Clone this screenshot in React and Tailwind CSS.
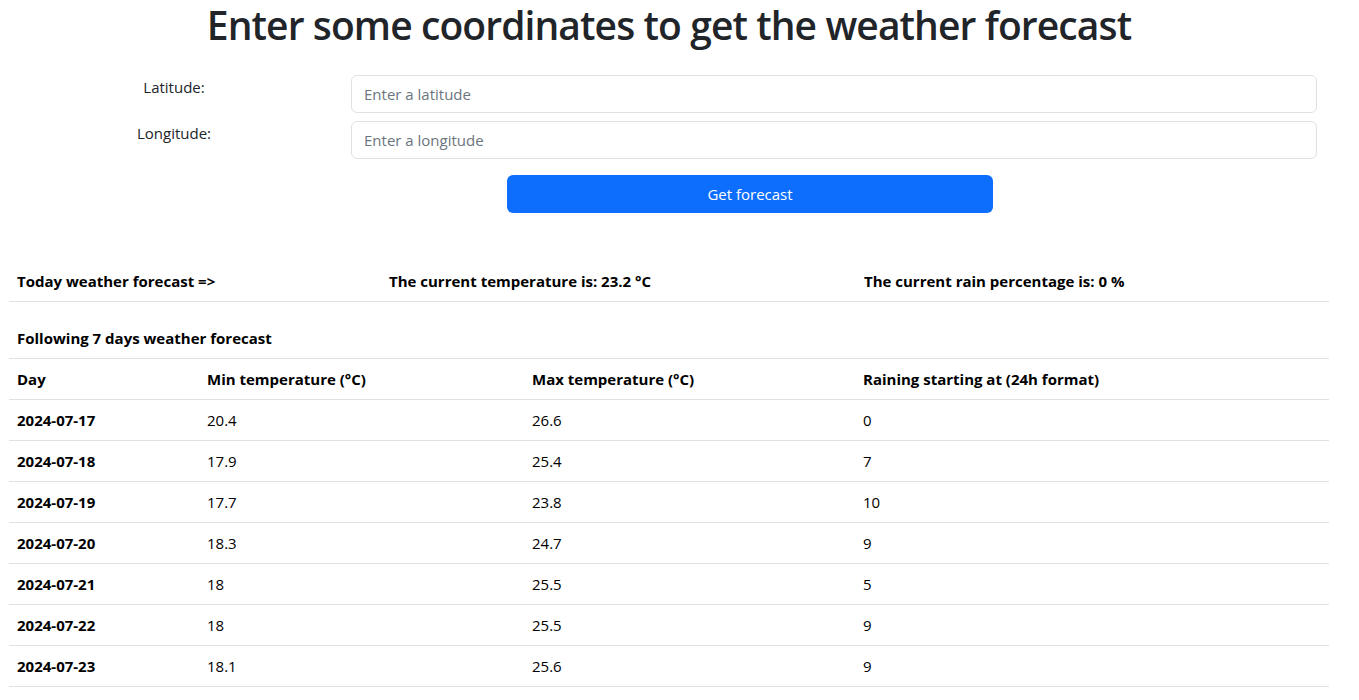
const days = [
  { day: "2024-07-17", min: "20.4", max: "26.6", rain: "0" },
  { day: "2024-07-18", min: "17.9", max: "25.4", rain: "7" },
  { day: "2024-07-19", min: "17.7", max: "23.8", rain: "10" },
  { day: "2024-07-20", min: "18.3", max: "24.7", rain: "9" },
  { day: "2024-07-21", min: "18", max: "25.5", rain: "5" },
  { day: "2024-07-22", min: "18", max: "25.5", rain: "9" },
  { day: "2024-07-23", min: "18.1", max: "25.6", rain: "9" },
];

export default function App() {
  return (
    <div
      className="min-h-screen bg-white text-[#212529] text-base"
      style={{ fontFamily: '"Open Sans", "Noto Sans", sans-serif' }}
    >
      <div className="w-[1320px] ml-[9px]">
        <h1 className="pt-[1px] text-[39px] leading-[47px] font-semibold text-center tracking-[-0.9px]">
          Enter some coordinates to get the weather forecast
        </h1>

        <div className="mt-[27px] flex flex-col gap-2">
          <div className="flex">
            <label className="w-[330px] text-center leading-6 text-[15px]">Latitude:</label>
            <div className="flex-1 px-3">
              <input
                placeholder="Enter a latitude"
                className="w-full h-[38px] px-3 border border-[#dee2e6] rounded-md text-[15px] placeholder-[#6c757d] outline-none"
              />
            </div>
          </div>
          <div className="flex">
            <label className="w-[330px] text-center leading-6 text-[15px]">Longitude:</label>
            <div className="flex-1 px-3">
              <input
                placeholder="Enter a longitude"
                className="w-full h-[38px] px-3 border border-[#dee2e6] rounded-md text-[15px] placeholder-[#6c757d] outline-none"
              />
            </div>
          </div>
        </div>

        <div className="mt-4 pl-[498px]">
          <button className="w-[486px] h-[38px] rounded-md bg-[#0d6efd] text-white text-[15px]">
            Get forecast
          </button>
        </div>

        <div className="mt-[49px] flex h-[40px] items-center border-b border-[#dee2e6] font-bold text-[15px] text-black">
          <div className="w-[372px] px-2">Today weather forecast =&gt;</div>
          <div className="w-[475px] px-2">The current temperature is: 23.2 °C</div>
          <div className="flex-1 px-2">The current rain percentage is: 0 %</div>
        </div>

        <div className="mt-4 h-[41px] flex items-center px-2 border-b border-[#dee2e6] font-bold text-[15px] text-black">
          Following 7 days weather forecast
        </div>

        <table className="w-full text-[15px] text-black border-collapse">
          <thead>
            <tr className="h-[40px] border-b border-[#dee2e6] font-bold">
              <td className="w-[190px] px-2">Day</td>
              <td className="w-[325px] px-2">Min temperature (°C)</td>
              <td className="w-[331px] px-2">Max temperature (°C)</td>
              <td className="px-2">Raining starting at (24h format)</td>
            </tr>
          </thead>
          <tbody>
            {days.map((d) => (
              <tr key={d.day} className="h-[41px] border-b border-[#dee2e6]">
                <td className="px-2 pt-[2px] font-bold">{d.day}</td>
                <td className="px-2 pt-[2px]">{d.min}</td>
                <td className="px-2 pt-[2px]">{d.max}</td>
                <td className="px-2 pt-[2px]">{d.rain}</td>
              </tr>
            ))}
          </tbody>
        </table>
      </div>
    </div>
  );
}
